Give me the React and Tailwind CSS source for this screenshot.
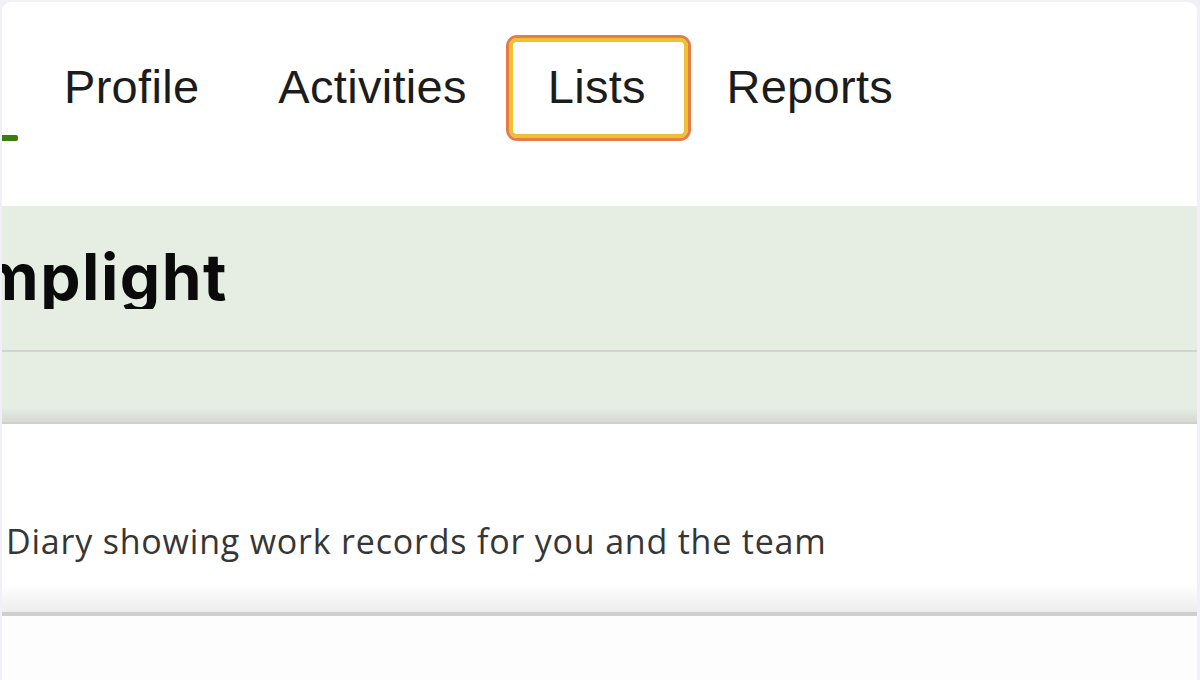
import React from 'react';

const TABS = ['Profile', 'Activities', 'Lists', 'Reports'];

export default function App() {
  return (
    <div className="w-[1200px] h-[680px] overflow-hidden bg-[#f0f0f6] pt-[2px] pl-[2px] pr-[3px]">
      <div className="h-full bg-white rounded-t-[9px] overflow-hidden flex flex-col">
        {/* Top navigation */}
        <div className="h-[204px] flex items-start pt-[33px]">
          {/* active tab (cut off on the left) */}
          <div className="w-[22.5px] h-[106px] flex items-end">
            <div className="w-[16px] h-[6px] bg-[#3d7c10] rounded-r-[2px]" />
          </div>
          {TABS.map((tab) => (
            <div
              key={tab}
              className={
                tab === 'Lists'
                  ? 'h-[106px] pl-[39px] pr-[42.5px] pt-[25px] rounded-[11px] border-[3px] border-[#e57d48] shadow-[inset_0_0_0_4px_#edc134] ml-[-0.5px] mr-[-4.5px]'
                  : 'h-[106px] px-[39.5px] pt-[28px]'
              }
            >
              <span className="block font-['Liberation_Sans',Arial,sans-serif] text-[47px] leading-none tracking-[0.3px] text-[#1c1c1c] whitespace-nowrap">
                {tab}
              </span>
            </div>
          ))}
        </div>

        {/* Account banner */}
        <div className="bg-[#e6ede3]">
          <div className="h-[146px] pt-[39px] border-b-2 border-[#d3d4d2]">
            <div className="w-[226px] overflow-hidden flex justify-end">
              <h1 className="font-['Inter',sans-serif] font-bold text-[64px] leading-none tracking-[1.5px] text-[#0a0a0a] whitespace-nowrap">
                Lamplight
              </h1>
            </div>
          </div>
          <div className="h-[72px] bg-gradient-to-b from-[#e6ede3] from-80% to-[#d6d9d4] border-b-2 border-[#cfd0ce]" />
        </div>

        {/* Diary row */}
        <div className="h-[192px] bg-gradient-to-b from-white from-85% to-[#ededed] border-b-[4px] border-[#cfcfcf] pl-[4px] pt-[100px]">
          <p className="font-['Open_Sans',sans-serif] text-[34px] leading-none tracking-[0.8px] text-[#363636] whitespace-nowrap">
            Diary showing work records for you and the team
          </p>
        </div>

        <div className="flex-1 bg-[#fdfdfd]" />
      </div>
    </div>
  );
}
